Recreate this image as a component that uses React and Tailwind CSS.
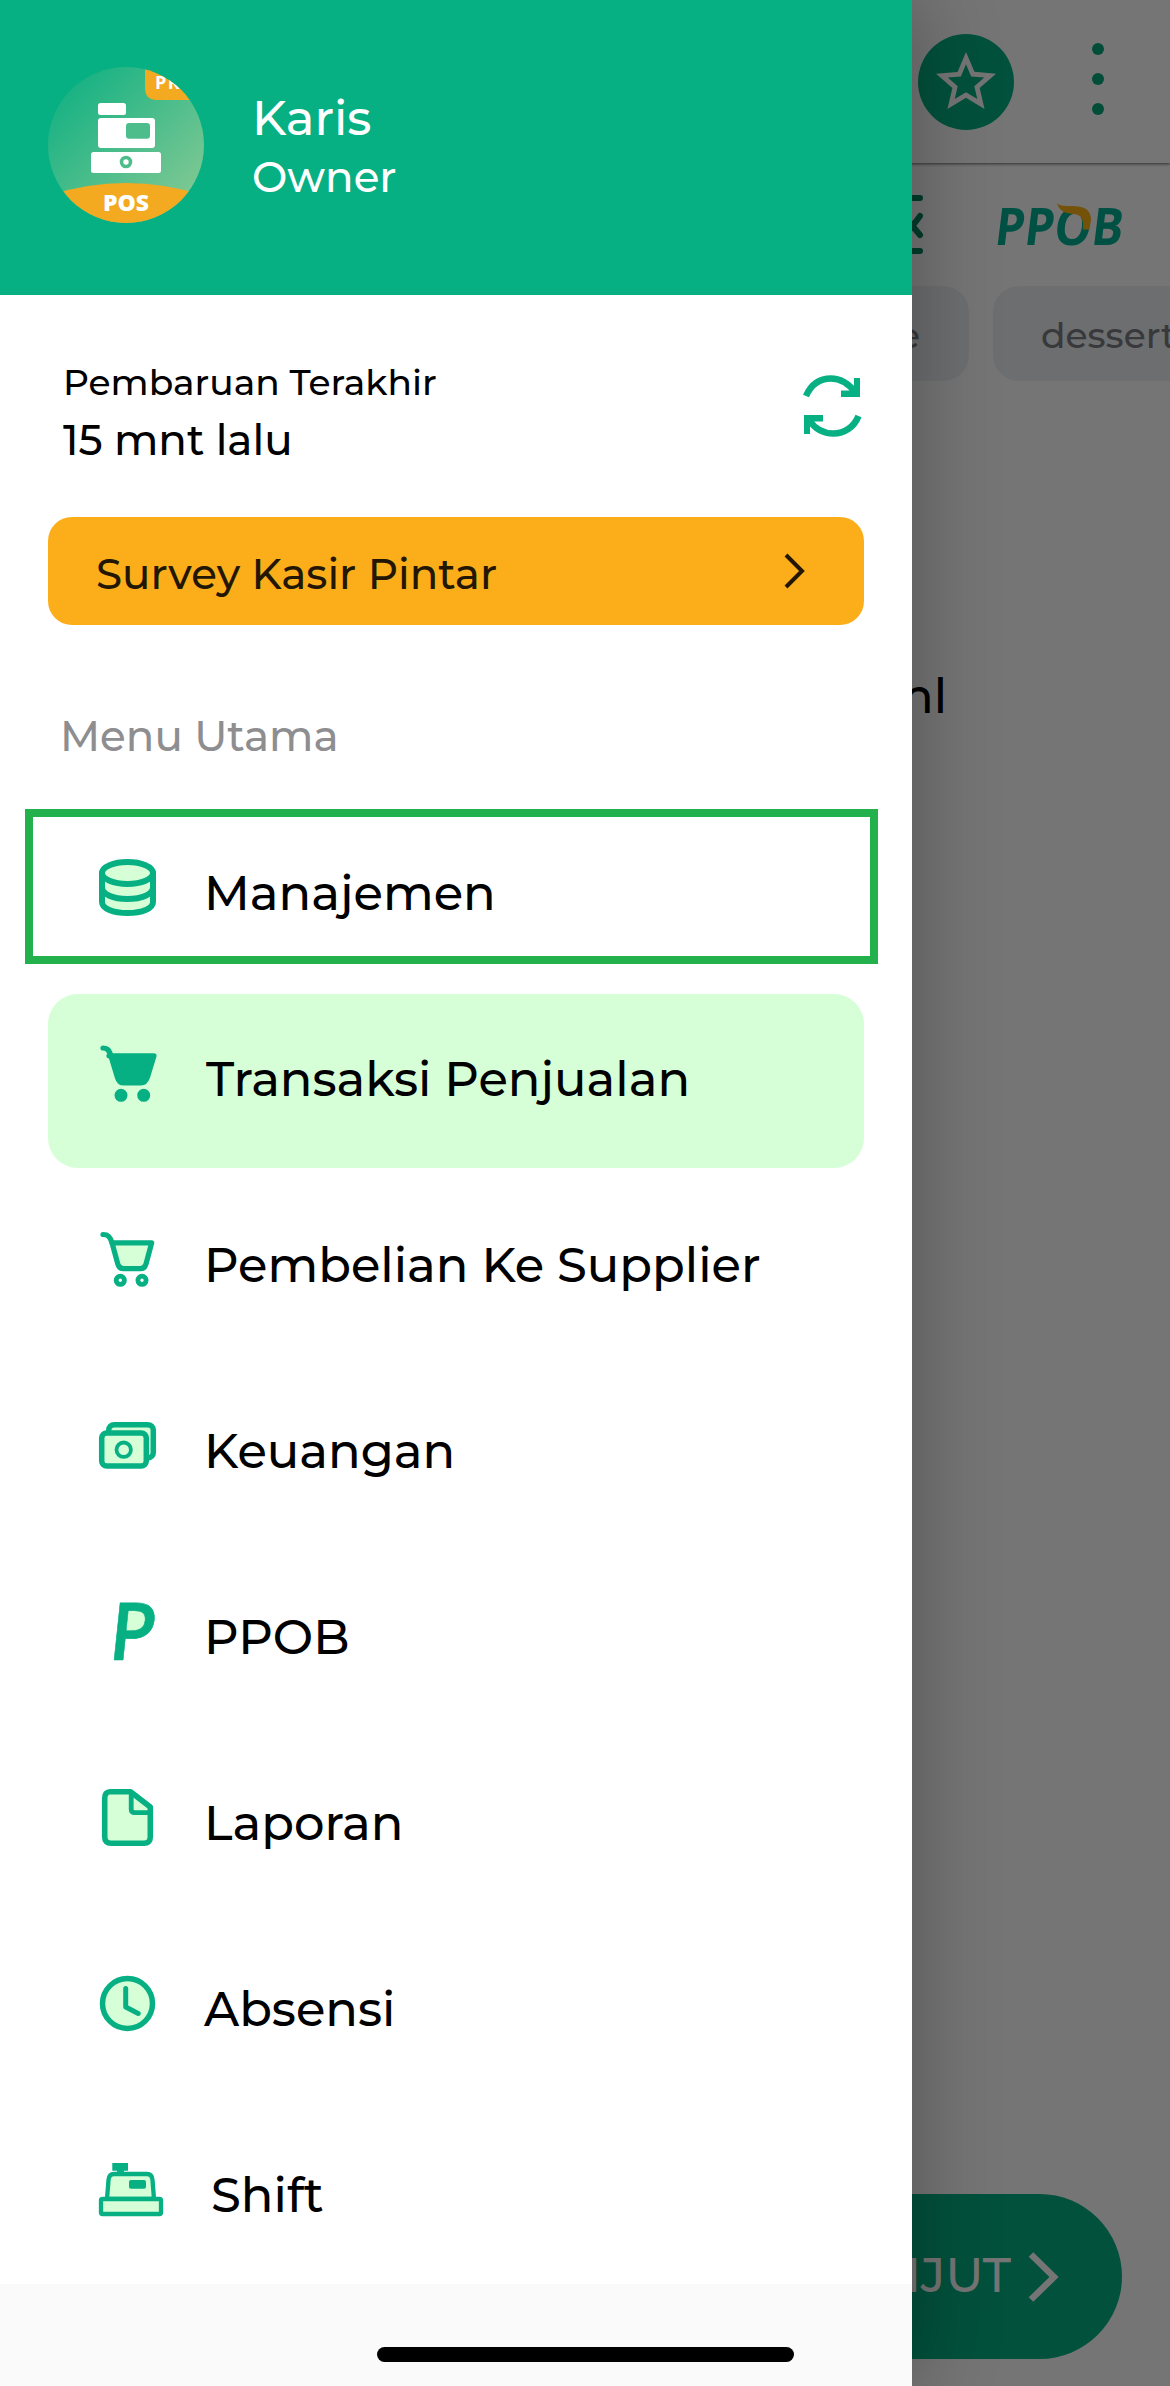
import { MdStarBorder } from 'react-icons/md';

const GREEN = '#06b083';
const LIGHT = '#d6ffd8';

const outline = { fill: LIGHT, stroke: GREEN, strokeLinecap: 'round', strokeLinejoin: 'round' };

const DatabaseIcon = () => (
    <svg width="72" height="64" viewBox="0 0 72 64" strokeWidth="6" {...outline}>
        <path d="M6 17v29c0 6.500 11 11 25.500 11S57 52.500 57 46V17" />
        <ellipse cx="31.500" cy="17" rx="25.500" ry="11" />
        <path d="M6 31.500c0 6.500 11 11.500 25.500 11.500S57 38 57 31.500" fill="none" />
    </svg>
);

const CartIcon = ({ filled }) => (
    <svg width="72" height="64" viewBox="0 0 72 64" strokeWidth="5.200" {...outline}>
        {filled ? (
            <path d="M13 13.800h45L51.500 35c-1.500 4.500-3 6-6.500 6H28c-3.500 0-5.500-1.500-6.700-6L14 11C13 7.500 11 6 7 6" fill={GREEN} />
        ) : (
            <>
                <path d="M16 14.800h39.700L50 36c-1 3.500-2.500 4.700-5.500 4.700H27.500c-3 0-4.700-1.200-5.700-4.700z" />
                <path d="M16 14.800C14 8.500 12 6.500 7 6.500" fill="none" />
            </>
        )}
        <circle cx={filled ? 25 : 24.300} cy={filled ? 53.300 : 52.300} r="4.100" fill={filled ? GREEN : '#fff'} strokeWidth="4.800" />
        <circle cx={filled ? 47.700 : 46} cy={filled ? 53.300 : 52.300} r="4.100" fill={filled ? GREEN : '#fff'} strokeWidth="4.800" />
    </svg>
);

const MoneyIcon = () => (
    <svg width="72" height="64" viewBox="0 0 72 64" strokeWidth="5.500" {...outline}>
        <rect x="12.700" y="10.700" width="44.600" height="33.300" rx="5.500" />
        <rect x="5.700" y="19" width="44.600" height="33" rx="5" />
        <circle cx="27.700" cy="35.700" r="7.200" strokeWidth="3.800" />
    </svg>
);

const PpobIcon = () => (
    <svg width="72" height="64" viewBox="0 0 72 64">
        <path d="M32 7h12c6 0 10 4 10 11s-5 17-14 17H29z" fill={LIGHT} />
        <text transform="translate(11 60) skewX(-6) scale(.95 1)" fontFamily="Open Sans, sans-serif" fontWeight="600" fontSize="80" fill={GREEN} stroke={GREEN} strokeWidth="0.600">P</text>
    </svg>
);

const FileIcon = () => (
    <svg width="72" height="64" viewBox="0 0 72 64" strokeWidth="5.600" {...outline}>
        <path d="M14 5.700h20.500L54.300 21v30c0 4-2.300 6.300-6.300 6.300H15c-4 0-6.300-2.300-6.300-6.300V12c0-4 2-6.300 5.300-6.300z" />
        <path d="M35.200 7v16c0 2.500 1 3.700 3.500 3.700H54" fill="none" strokeWidth="4.800" />
    </svg>
);

const ClockIcon = () => (
    <svg width="72" height="64" viewBox="0 0 72 64" strokeWidth="5.500" {...outline}>
        <circle cx="31.500" cy="31.500" r="25" />
        <path d="M29.700 16.500v18.500l12.500 6.500" fill="none" strokeWidth="5" />
    </svg>
);

const RegisterIcon = () => (
    <svg width="72" height="64" viewBox="0 0 72 64" strokeWidth="4.300" {...outline}>
        <path d="M11 41l1.500-19c.3-4 2-6 5.500-6h33c3.500 0 5.200 2 5.500 6L58 41z" />
        <rect x="5" y="41" width="60" height="15" rx="1.500" />
        <path d="M16.300 5H32v7.700h-4V15h-7v-2.300h-4.700z" fill={GREEN} stroke="none" />
        <rect x="33" y="22" width="17" height="8.700" rx="2" fill={GREEN} stroke="none" />
    </svg>
);

const RefreshIcon = () => (
    <svg width="60" height="64" viewBox="0 0 60 64" fill="none" stroke={GREEN} strokeWidth="6.500">
        <path d="M3 22C8 10.500 17 4.500 28 4.500 37 4.500 45 9 52 18" />
        <path d="M57 4v19H38v-6.500h10l3-4V4z" fill={GREEN} stroke="none" />
        <path d="M55.500 42C51 53.500 41 59.500 30.500 59.500 21 59.500 12 55 6 46" />
        <path d="M1 60V41h19v6.500H10l-3 4V60z" fill={GREEN} stroke="none" />
    </svg>
);

const Avatar = () => (
    <svg width="156" height="156" viewBox="0 0 156 156">
        <defs>
            <linearGradient id="face" x1="0" y1="0" x2="1" y2="1">
                <stop offset="0.100" stopColor="#14b183" />
                <stop offset="0.900" stopColor="#82c993" />
            </linearGradient>
            <clipPath id="round">
                <circle cx="78" cy="78" r="78" />
            </clipPath>
        </defs>
        <g clipPath="url(#round)">
            <rect width="156" height="156" fill="url(#face)" />
            <path d="M97 0v21c0 8 4 12 12 12h47V0z" fill="#f3a920" />
            <text x="107" y="22" fontFamily="Open Sans, sans-serif" fontWeight="700" fontSize="18" letterSpacing="1.500" fill="#fff">PRO</text>
            <rect x="50" y="36" width="28" height="12" rx="2.500" fill="#fff" />
            <rect x="50" y="51" width="57" height="30" rx="3" fill="#fff" />
            <rect x="78" y="56" width="24" height="15.700" rx="3" fill="#4dbd8b" />
            <rect x="43" y="85" width="70" height="21" rx="2.500" fill="#fff" />
            <circle cx="78" cy="95" r="4.500" fill="#fff" stroke="#4dbd8b" strokeWidth="3.600" />
            <path d="M0 128.500Q78 103.500 156 128.500V156H0z" fill="#f3a920" />
            <text x="78" y="143.700" textAnchor="middle" fontFamily="Open Sans, sans-serif" fontWeight="800" fontSize="23" fill="#fff">POS</text>
        </g>
    </svg>
);

const PpobLogo = () => (
    <svg className="overflow-visible" width="128" height="48" viewBox="0 0 128 48">
        <g fontFamily="Open Sans, sans-serif" fontWeight="700" fontSize="52" fill="#00ae94">
            <text transform="translate(0 43) skewX(-7)" x="-4.500" y="0" textLength="128" lengthAdjust="spacingAndGlyphs">PPOB</text>
        </g>
        <path d="M58.700 1C62 4 66 4 74 4c11 0 19 3 19 13.500L91.500 27.500h-6.500C86 17 83 12.500 76 12c-8-.5-14-2-17.300-11z" fill="#ffb414" />
    </svg>
);

const menu = [
    { label: 'Manajemen', icon: <DatabaseIcon />, marked: true },
    { label: 'Transaksi Penjualan', icon: <CartIcon filled />, active: true },
    { label: 'Pembelian Ke Supplier', icon: <CartIcon /> },
    { label: 'Keuangan', icon: <MoneyIcon /> },
    { label: 'PPOB', icon: <PpobIcon /> },
    { label: 'Laporan', icon: <FileIcon /> },
    { label: 'Absensi', icon: <ClockIcon /> },
    { label: 'Shift', icon: <RegisterIcon />, indent: 'pl-[43px]' }
];

const CashierPage = () => (
    <div className="flex h-full flex-col">
        <header className="flex h-[163px] shrink-0 items-start justify-end bg-white pt-[34px] pr-[66px] shadow-[0_1px_3px_rgba(0,0,0,0.6)]">
            <div className="mr-[78px] flex h-24 w-24 items-center justify-center rounded-full bg-[#06b083] text-white">
                <MdStarBorder size={72} />
            </div>
            <div className="flex flex-col gap-[18px] pt-[9px]">
                <span className="h-3 w-3 rounded-full bg-[#06a87a]" />
                <span className="h-3 w-3 rounded-full bg-[#06a87a]" />
                <span className="h-3 w-3 rounded-full bg-[#06a87a]" />
            </div>
        </header>

        <div className="flex h-[123px] shrink-0 items-start justify-end pt-8 pr-[44px]">
            <svg className="mr-[73px]" width="60" height="60" viewBox="0 0 60 60" fill="none" stroke="#00855c" strokeWidth="6" strokeLinecap="round" strokeLinejoin="round">
                <path d="M40 3h15M40 56h15M55 21l-7.500 10L55 40M40 21l7.500 10L40 40" />
            </svg>
            <div className="pt-[7px]">
                <PpobLogo />
            </div>
        </div>

        <div className="flex shrink-0 gap-6 pl-[780px] text-[36px] text-[#7b7c81]">
            <div className="flex h-[95px] w-[189px] shrink-0 items-center justify-end rounded-[26px] bg-[#edf0f4] pt-[2px] pr-[49px] font-medium">e</div>
            <div className="flex h-[95px] shrink-0 items-center rounded-[26px] bg-[#edf0f4] px-[48px] pt-[2px] font-medium">dessert</div>
        </div>

        <p className="mt-[285px] pl-[883px] text-[48px] leading-[60px] font-medium text-black">ml</p>

        <div className="mt-auto mr-12 mb-[27px] ml-12 flex h-[165px] items-center justify-end rounded-full bg-[#06b083] pr-[57px] text-[48px] font-medium text-white">
            <span className="pb-[3px]">LANJUT</span>
            <svg className="ml-3" width="42" height="56" viewBox="0 0 42 56" fill="none" stroke="currentColor" strokeWidth="6.500">
                <path d="M8 5.500L31 28 8 50.500" />
            </svg>
        </div>
    </div>
);

const Drawer = () => (
    <aside className="absolute inset-y-0 left-0 flex w-[912px] flex-col bg-white shadow-[0_0_80px_rgba(0,0,0,0.3)]">
        <div className="flex h-[295px] shrink-0 items-start bg-[#06b083] pt-[67px] pl-12 font-medium text-white">
            <Avatar />
            <div className="pt-[21px] pl-[48px]">
                <p className="text-[48px] leading-[60px]">Karis</p>
                <p className="text-[42px] leading-[58px]">Owner</p>
            </div>
        </div>

        <div className="flex h-[222px] shrink-0 items-start justify-between pt-[60px] pr-[49px] pl-[63px] font-medium text-black">
            <div>
                <p className="text-[36px] leading-[54px]">Pembaruan Terakhir</p>
                <p className="text-[42px] leading-[62px]">15 mnt lalu</p>
            </div>
            <div className="pt-[19px]">
                <RefreshIcon />
            </div>
        </div>

        <button className="mx-12 flex h-[108px] shrink-0 items-center justify-between rounded-[24px] bg-[#fbae1a] pr-[54px] pl-12 text-[42px] font-medium text-[#231703]">
            <span className="pt-[7px]">Survey Kasir Pintar</span>
            <svg width="30" height="40" viewBox="0 0 30 40" fill="none" stroke="currentColor" strokeWidth="4">
                <path d="M6 4l16 16L6 36" />
            </svg>
        </button>

        <h2 className="h-[183px] shrink-0 pt-[80px] pl-[60px] text-[42px] leading-[62px] font-medium text-[#8e8e90]">Menu Utama</h2>

        <nav className="flex flex-col gap-3 px-12">
            {menu.map((item) => (
                <div key={item.label} className={`relative flex h-[174px] items-start rounded-[30px] pl-12 ${item.active ? 'bg-[#d6ffd8]' : ''}`}>
                    <span className="mt-12">{item.icon}</span>
                    <span className={`mt-[55px] text-[48px] leading-[60px] font-medium text-black ${item.indent || (item.active ? 'pl-[38px]' : 'pl-[36px]')}`}>{item.label}</span>
                    {item.marked && <span className="absolute top-px -left-[23px] h-[155px] w-[853px] border-8 border-[#22b14c]" />}
                </div>
            ))}
        </nav>

        <div className="flex flex-1 items-start bg-[#fafafa] pt-[63px] pl-[377px]">
            <span className="h-[15px] w-[417px] rounded-full bg-black" />
        </div>
    </aside>
);

const App = () => {
    return (
        <div className="relative h-[2386px] w-[1170px] overflow-hidden bg-white font-['Montserrat','Inter',sans-serif]">
            <CashierPage />
            <div className="absolute inset-0 bg-black/54" />
            <Drawer />
        </div>
    );
};

export default App;
